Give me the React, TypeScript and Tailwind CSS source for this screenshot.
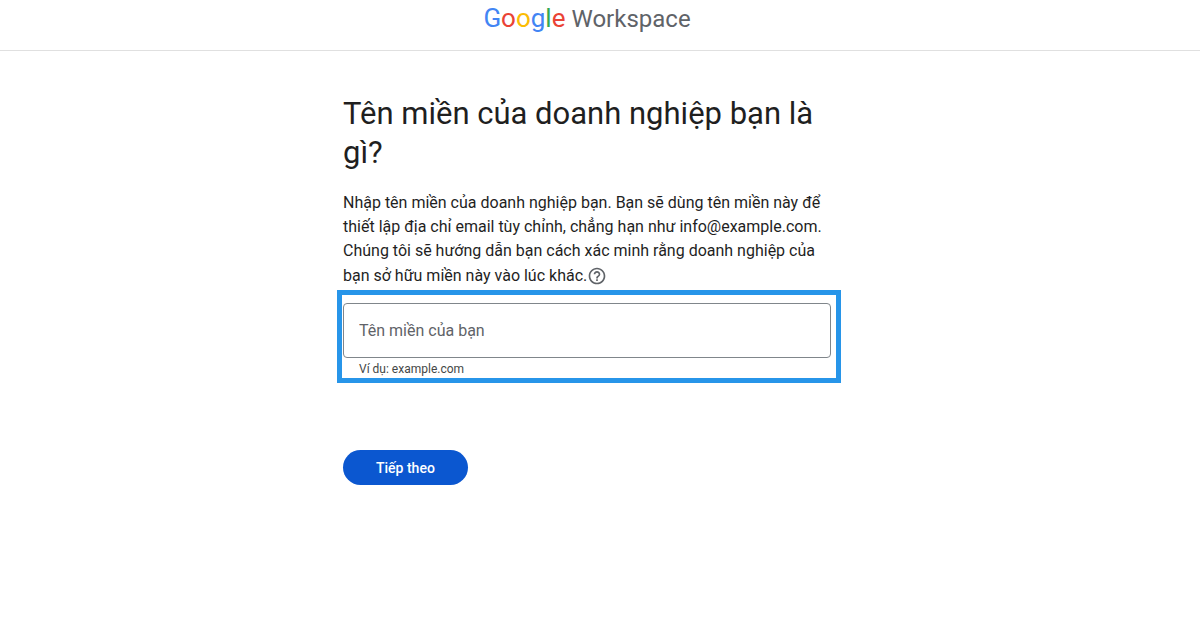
import { MdHelpOutline } from "react-icons/md";

function Logo() {
  return (
    <a
      href="#"
      aria-label="Google Workspace"
      className="flex items-baseline gap-1.5 whitespace-nowrap font-['Roboto',sans-serif] leading-8 text-[#5f6368]"
    >
      <span className="text-[26px]">
        <span className="text-[#4285f4]">G</span>
        <span className="text-[#ea4335]">o</span>
        <span className="text-[#fbbc04]">o</span>
        <span className="text-[#4285f4]">g</span>
        <span className="text-[#34a853]">l</span>
        <span className="text-[#ea4335]">e</span>
      </span>
      <span className="text-2xl leading-8">Workspace</span>
    </a>
  );
}

export default function App() {
  return (
    <div className="min-h-screen bg-white font-['Roboto',sans-serif] text-[#1f1f1f]">
      <header className="flex h-[51px] items-start justify-center border-b border-[#e0e0e0] pt-0.5 pr-[26px]">
        <Logo />
      </header>

      <main className="flex justify-center pt-[43px] pr-[26px]">
        <form className="w-full max-w-[488px]" onSubmit={(e) => e.preventDefault()}>
          <h1 className="text-[31px] leading-[39px]">
            Tên miền của doanh nghiệp bạn là
            <br />
            gì?
          </h1>

          <p className="mt-[19px] mb-0.5 text-base leading-6 whitespace-nowrap">
            Nhập tên miền của doanh nghiệp bạn. Bạn sẽ dùng tên miền này để
            <br />
            thiết lập địa chỉ email tùy chỉnh, chẳng hạn như info@example.com.
            <br />
            Chúng tôi sẽ hướng dẫn bạn cách xác minh rằng doanh nghiệp của
            <br />
            <span className="flex h-[25px] items-center">
              bạn sở hữu miền này vào lúc khác.
              <button type="button" aria-label="Trợ giúp" className="text-[#5f6368]">
                <MdHelpOutline size={20} />
              </button>
            </span>
          </p>

          <div className="-mr-2.5 -ml-1.5 border-[5px] border-[#2795e9] pt-2 pr-[5px] pl-px">
            <input
              type="text"
              aria-label="Tên miền của bạn"
              aria-describedby="domain-hint"
              placeholder="Tên miền của bạn"
              className="block h-[55px] w-full rounded border border-[#80868b] px-[15px] text-base outline-none placeholder:text-[#5f6368]"
            />
            <p id="domain-hint" className="px-4 pt-[3px] pb-px text-xs leading-4 text-[#444746]">
              Ví dụ: example.com
            </p>
          </div>

          <button
            type="submit"
            className="mt-[67px] h-[35px] rounded-full bg-[#0b57d0] px-[33px] text-sm font-medium text-white"
          >
            Tiếp theo
          </button>
        </form>
      </main>
    </div>
  );
}
